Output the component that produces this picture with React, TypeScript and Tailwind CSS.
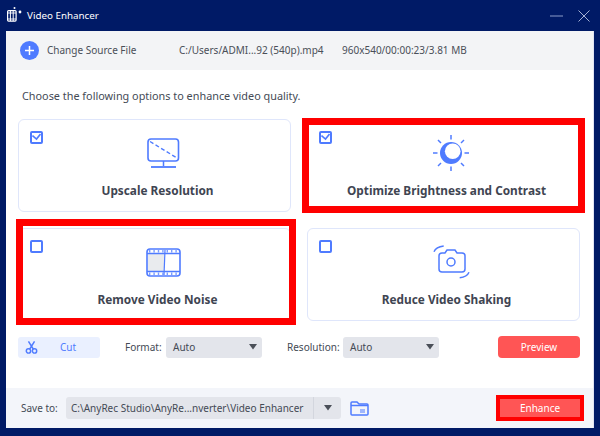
import React from "react";

const BLUE = "#4f7bff";

function Check({ on }: { on?: boolean }) {
  return (
    <div className="w-[13px] h-[13px] border-2 border-[#4f7bff] rounded-[2px] bg-white flex items-center justify-center">
      {on && (
        <svg width="9" height="9" viewBox="0 0 9 9" fill="none">
          <path d="M0.5 2.5 L4.5 6 L8.5 1" stroke={BLUE} strokeWidth="1.6" />
        </svg>
      )}
    </div>
  );
}

function Monitor() {
  return (
    <svg width="33" height="30" viewBox="0 0 33 30" fill="none" stroke={BLUE}>
      <rect x="1" y="1" width="30.5" height="22" rx="3" strokeWidth="1.6" />
      <path d="M3 3.5 L30 20" strokeWidth="1.4" strokeDasharray="4 2.5" />
      <path d="M16.5 23 V28" strokeWidth="1.5" />
      <path d="M4 29 H29" strokeWidth="1.8" />
    </svg>
  );
}

function Sun() {
  return (
    <svg width="38" height="38" viewBox="0 0 38 38" fill="none" stroke={BLUE}>
      <g strokeWidth="1.5">
        <path d="M19 1 V5.5" />
        <path d="M19 32.5 V37" />
        <path d="M1 19 H5.5" />
        <path d="M32.5 19 H37" />
        <path d="M6 6 L9 9" />
        <path d="M29 29 L32 32" />
        <path d="M6 32 L9 29" />
        <path d="M29 9 L32 6" />
      </g>
      <circle cx="19" cy="19" r="11" fill={BLUE} stroke="none" />
      <circle cx="20.7" cy="17.3" r="7.8" fill="#fff" stroke="none" />
    </svg>
  );
}

function Film() {
  return (
    <svg width="35" height="29" viewBox="0 0 35 29" fill="none">
      <rect x="2" y="5.5" width="15" height="18" fill="#e9ebee" />
      <path d="M17 5.5 H19 L18 23.5 H17 Z" fill="#e9ebee" />
      <rect x="1" y="1" width="33" height="27" rx="3" stroke={BLUE} strokeWidth="1.6" />
      <path d="M1 5.5 H34 M1 23.5 H34" stroke={BLUE} strokeWidth="1.3" />
      <path d="M3 3.2 H32 M3 25.8 H32" stroke={BLUE} strokeWidth="2.6" strokeDasharray="1.4 3" opacity="0.75" />
      <path d="M19 2 L18 27" stroke={BLUE} strokeWidth="1.2" />
    </svg>
  );
}

function ShakeCam() {
  return (
    <svg width="38" height="34" viewBox="0 0 38 34" fill="none" stroke={BLUE} strokeWidth="1.5">
      <path d="M9 8 H12 L14 5 H22 L24 8 H29 Q32 8 32 11 V24 Q32 27 29 27 H9 Q6 27 6 24 V11 Q6 8 9 8 Z" />
      <circle cx="18" cy="17" r="4" />
      <path d="M1 6.7 Q3 2 10.7 1" />
      <path d="M36 27.3 Q34 32 26.7 32.7" />
    </svg>
  );
}

function Card({
  on,
  icon,
  label,
  iconBox,
  children,
}: {
  on?: boolean;
  icon: React.ReactNode;
  label: string;
  iconBox: string;
  children?: React.ReactNode;
}) {
  return (
    <div className="relative h-[93px] bg-white border border-[#dfe6fb] rounded-[6px] flex flex-col items-center">
      <div className="absolute left-[11px] top-[11px]">
        <Check on={on} />
      </div>
      <div className={`${iconBox} mt-[14px] h-[38px] flex items-center justify-center`}>{icon}</div>
      <div className="absolute left-[6px] right-0 bottom-[12px] text-center font-bold text-[11.8px] leading-[18px] text-[#3f4552]">
        {label}
      </div>
      {children}
    </div>
  );
}

function Caret() {
  return (
    <svg width="10" height="6" viewBox="0 0 10 6">
      <path d="M1 0 H9 L5 5.5 Z" fill="#4a4f58" />
    </svg>
  );
}

function Select({ text }: { text: string }) {
  return (
    <div className="w-[96px] h-[21px] bg-[#e3e5eb] rounded-[3px] flex items-center justify-between pl-[7px] pr-[4px] text-[10px] text-[#444a55]">
      <span>{text}</span>
      <Caret />
    </div>
  );
}

export default function App() {
  return (
    <div
      className="w-[600px] h-[436px] bg-[#001a66] flex flex-col overflow-hidden"
      style={{ fontFamily: "'Noto Sans', 'Open Sans', sans-serif" }}
    >
      <div className="h-[31px] shrink-0 flex items-center text-white">
        <svg className="ml-[6px]" width="17" height="17" viewBox="0 0 17 17" fill="none">
          <rect x="1.6" y="3.6" width="8.5" height="10.5" rx="1" stroke="#fff" strokeWidth="1.2" />
          <path d="M4.4 4 V14 M7.2 4 V14" stroke="#fff" strokeWidth="1" />
          <path d="M1.6 6 H10 M1.6 12 H10" stroke="#fff" strokeWidth="0.9" />
          <circle cx="8.5" cy="1" r="1" fill="#fff" />
          <circle cx="14" cy="5" r="1.4" fill="#fff" />
        </svg>
        <span className="ml-[4px] text-[9.8px] mt-px">Video Enhancer</span>
        <div className="ml-auto flex items-center mr-[10px] gap-[15px]">
          <svg width="13" height="2" viewBox="0 0 13 2">
            <path d="M0 1 H13" stroke="#8b9cc9" strokeWidth="1" />
          </svg>
          <svg width="12" height="12" viewBox="0 0 12 12">
            <path d="M0.5 0.5 L11.5 11.5 M11.5 0.5 L0.5 11.5" stroke="#a4b1d4" strokeWidth="1" />
          </svg>
        </div>
      </div>

      <div className="mx-[6px] h-[397px] shrink-0 bg-white border-r border-[#dfe3f3] flex flex-col relative">
        <div className="h-[39px] shrink-0 bg-[#f3f4f6] flex items-center text-[10px] text-[#4a4f58] pl-[14px]">
          <div className="w-[19px] h-[19px] rounded-full bg-[#4f7bff] flex items-center justify-center">
            <svg width="11" height="11" viewBox="0 0 11 11">
              <path d="M5.5 1 V10 M1 5.5 H10" stroke="#fff" strokeWidth="1.5" />
            </svg>
          </div>
          <span className="ml-[8px] w-[132px]">Change Source File</span>
          <span className="w-[163px]">C:/Users/ADMI...92 (540p).mp4</span>
          <span>960x540/00:00:23/3.81 MB</span>
        </div>

        <div className="pl-[16px] mt-[17px] h-[18px] text-[10.85px] leading-[18px] text-[#444a55]">
          Choose the following options to enhance video quality.
        </div>

        <div className="mt-[14px] pl-[12px] pr-[13px] grid grid-cols-2 gap-x-4 gap-y-4">
          <Card on icon={<Monitor />} label="Upscale Resolution" iconBox="pl-[17px]" />
          <Card on icon={<Sun />} label="Optimize Brightness and Contrast" iconBox="pl-[14px]">
            <div className="absolute -left-[6px] -right-[6px] -top-[2px] -bottom-[2px] border-[7px] border-[#ff0000] pointer-events-none" />
          </Card>
          <Card icon={<Film />} label="Remove Video Noise" iconBox="pl-[17px]">
            <div className="absolute -left-[3px] -right-[6px] -top-[10px] -bottom-[5px] border-[7px] border-[#ff0000] pointer-events-none" />
          </Card>
          <Card icon={<ShakeCam />} label="Reduce Video Shaking" iconBox="pl-[17px]" />
        </div>

        <div className="mt-[15px] pl-[12px] pr-[13px] flex items-center h-[22px] text-[10px] text-[#444a55]">
          <div className="w-[82px] h-[21px] bg-[#eaf0ff] rounded-[3px] flex items-center pl-[7px]">
            <svg width="13" height="13" viewBox="0 0 14 15" fill="none" stroke={BLUE} strokeWidth="1.7">
              <circle cx="3.5" cy="11.5" r="2.5" />
              <circle cx="10.5" cy="11.5" r="2.5" />
              <path d="M4.8 9.5 L10.5 0.5 M9.2 9.5 L3.5 0.5" />
            </svg>
            <span className="ml-[22px] text-[#4f7bff]">Cut</span>
          </div>
          <span className="ml-[25px] w-[41px]">Format:</span>
          <Select text="Auto" />
          <span className="ml-[25px] w-[56px]">Resolution:</span>
          <Select text="Auto" />
          <button className="ml-auto w-[82px] h-[22px] bg-[#ff5555] rounded-[4px] text-white text-[10px]">Preview</button>
        </div>

        <div className="mt-auto h-[40px] shrink-0 bg-[#f3f5fa] flex items-center text-[10px] text-[#444a55] pl-[15px] pr-[9px]">
          <span className="w-[45px]">Save to:</span>
          <div className="w-[275px] h-[22px] bg-[#e3e5eb] rounded-[3px] flex items-center">
            <span className="pl-[5px] w-[247px] whitespace-nowrap">C:\AnyRec Studio\AnyRe...nverter\Video Enhancer</span>
            <div className="h-full border-l border-[#d3d6de] flex-1 flex items-center justify-center">
              <Caret />
            </div>
          </div>
          <svg className="ml-[9px]" width="19" height="15" viewBox="0 0 19 15" fill="none">
            <path d="M1 13 V2 Q1 1 2 1 H7 L9 3 H17 Q18 3 18 4 V13 Q18 14 17 14 H2 Q1 14 1 13 Z" stroke={BLUE} strokeWidth="1.5" />
            <path d="M1 4.5 H18" stroke={BLUE} strokeWidth="1.5" />
            <path d="M10 9 H15 M10 11 H15" stroke={BLUE} strokeWidth="1.2" />
          </svg>
          <button className="ml-auto w-[88px] h-[26px] border-[4px] border-[#ff0000] bg-[#ff5555] text-white text-[10px]">Enhance</button>
        </div>
      </div>
    </div>
  );
}
